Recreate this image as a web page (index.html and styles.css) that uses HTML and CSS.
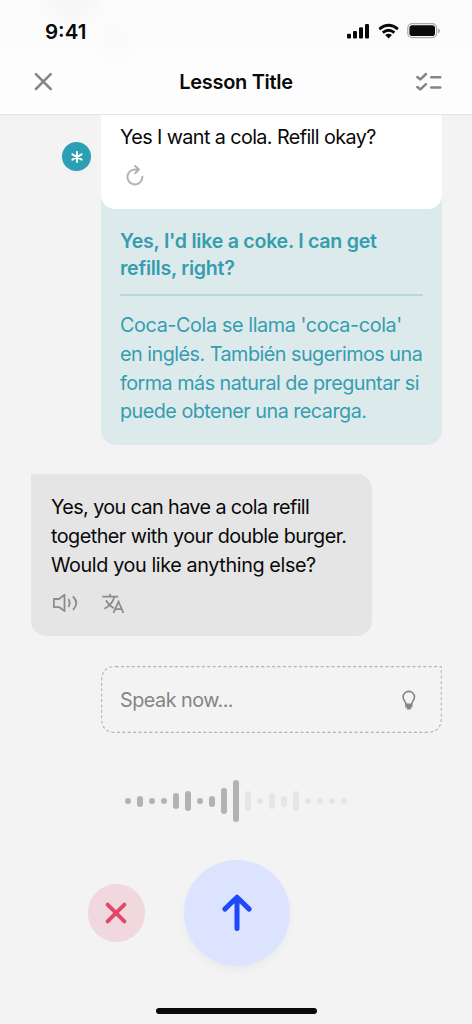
FILE: index.html
```html
<!DOCTYPE html>
<html lang="en">
<head>
<meta charset="utf-8">
<title>Lesson Title</title>
<link rel="stylesheet" href="styles.css">
</head>
<body>
<div class="screen">
  <header class="header">
    <div class="status">
      <span class="time">9:41</span>
      <svg class="status-icons" width="96" height="20" viewBox="344 21 96 20">
        <g fill="#0a0a0a">
          <rect x="347" y="33.7" width="4" height="4.8" rx="1.1"/>
          <rect x="353" y="31" width="4" height="7.5" rx="1.1"/>
          <rect x="359" y="27.3" width="4" height="11.2" rx="1.1"/>
          <rect x="365" y="24" width="4" height="14.5" rx="1.1"/>
          <path d="M385.2 35.1 Q388.6 32.5 392 35.1 L388.6 38.6 Z"/>
        </g>
        <path d="M379.3 29.1 Q388.6 21.4 397.9 29.1 M382.8 32.6 Q388.6 27.9 394.4 32.6" fill="none" stroke="#0a0a0a" stroke-width="2.7"/>
        <rect x="407.8" y="23.6" width="28.8" height="14" rx="4.4" fill="none" stroke="#aaa" stroke-width="1.2"/>
        <rect x="409.4" y="25.2" width="25.6" height="10.8" rx="2.8" fill="#0a0a0a"/>
        <path d="M438.1 28.6 Q440 29.2 440 31 Q440 32.7 438.1 33.3 Z" fill="#aaa"/>
      </svg>
    </div>
    <div class="nav">
      <svg class="nav-icon" width="28" height="24" viewBox="34 70 28 24" fill="none" stroke="#858585" stroke-width="2.5" stroke-linecap="round"><path d="M35.9 74.2 L50.7 89 M50.7 74.2 L35.9 89"/></svg>
      <h1 class="title">Lesson Title</h1>
      <svg class="nav-icon" width="28" height="24" viewBox="414 70 28 24" fill="none" stroke="#858585" stroke-width="2.5" stroke-linecap="round" stroke-linejoin="round"><path d="M417.3 77 L420.4 79.4 L426 74 M417.3 87 L420.4 89.4 L426 84.1 M431.2 77.3 H440.3 M431.2 87.4 H440.3"/></svg>
    </div>
  </header>

  <main class="chat">
    <section class="learner">
      <span class="badge"><svg width="14" height="14" viewBox="-7 -7 14 14" stroke="#fff" stroke-width="2" stroke-linecap="round"><path d="M0 -5.1 V5.1 M-4.6 -2.7 L4.6 2.7 M-4.6 2.7 L4.6 -2.7"/></svg></span>
      <div class="feedback">
        <div class="said">
          <p class="text"><span class="line l1">Yes I want a cola. Refill okay?</span></p>
          <svg class="retry" width="22" height="22" viewBox="0 0 22 22" fill="none" stroke="#b3b3b3" stroke-width="2" stroke-linecap="round" stroke-linejoin="round"><path d="M18.4 11.7 A7.5 7.5 0 1 1 10.9 4.4 L14.7 4.5 M11.2 1 L14.9 4.5 L11.2 8.2"/></svg>
        </div>
        <div class="notes">
          <p class="suggestion"><span class="line">Yes, I'd like a coke. I can get</span><span class="line">refills, right?</span></p>
          <p class="text explain"><span class="line l4">Coca-Cola se llama 'coca-cola'</span><span class="line">en inglés. También sugerimos una</span><span class="line">forma más natural de preguntar si</span><span class="line">puede obtener una recarga.</span></p>
        </div>
      </div>
    </section>

    <section class="reply">
      <p class="text"><span class="line l8">Yes, you can have a cola refill</span><span class="line">together with your double burger.</span><span class="line l10">Would you like anything else?</span></p>
      <div class="tools">
        <svg width="26" height="22" viewBox="52 592 26 22" fill="none" stroke="#8c8c8c" stroke-width="1.8" stroke-linecap="round" stroke-linejoin="round"><path d="M64.5 594.7 V611 L59 607.1 H53.9 V599 H59 Z M68.8 599.8 Q70.5 603 68.8 606.3 M73.4 597 Q79.2 603 73.4 609.3"/></svg>
        <svg width="24" height="22" viewBox="101 592 24 22" fill="none" stroke="#8c8c8c" stroke-width="1.8"><path d="M102.2 596.6 H118.2 M110 594 V596.6 M114.5 596.6 Q112.2 605 104.4 608.8 M106 600.2 Q109 605.7 114 608.2 M113.5 612.8 L118.5 601.7 L123.4 612.8 M115 609.2 H122"/></svg>
      </div>
    </section>

    <section class="prompt">
      <svg class="outline" width="341" height="67" fill="none" stroke="#b2b2b2" stroke-width="1.1" stroke-dasharray="3 2.4"><path d="M14.5 .6 H340.3 V52 Q340.3 66.4 326 66.4 H14.5 Q.6 66.4 .6 52 V15 Q.6 .6 14.5 .6"/></svg>
      <span class="line">Speak now...</span>
      <svg width="16" height="22" viewBox="401 688 16 22"><path d="M406 703.5 C406 700.6 403.1 699.4 403.1 695.9 A5.7 5.5 0 0 1 414.5 695.9 C414.5 699.4 411.6 700.6 411.6 703.5" fill="none" stroke="#858585" stroke-width="1.6"/><path d="M405.2 702.6 H412.4 V706.6 H410.8 V708.4 H406.8 V706.6 H405.2 Z" fill="#858585"/></svg>
    </section>
  </main>

  <footer class="controls">
    <div class="wave">
      <i class="dot"></i><i class="s"></i><i class="dot"></i><i class="dot"></i><i class="m"></i><i class="l"></i><i class="dot"></i><i class="s"></i><i class="xl"></i><i class="peak"></i>
      <i class="l idle"></i><i class="dot idle"></i><i class="m idle"></i><i class="s idle"></i><i class="l idle"></i><i class="dot idle"></i><i class="dot idle"></i><i class="dot idle"></i><i class="dot idle"></i>
    </div>
    <div class="actions">
      <button class="cancel" aria-label="Cancel"><svg width="24" height="24" viewBox="-12 -12 24 24" stroke="#e0486b" stroke-width="4" stroke-linecap="round"><path d="M-8.4 -8.4 L8.4 8.4 M8.4 -8.4 L-8.4 8.4"/></svg></button>
      <button class="send" aria-label="Send"><svg width="34" height="42" viewBox="-17 -21 34 42" fill="none" stroke="#1f49f5" stroke-width="5" stroke-linecap="round" stroke-linejoin="round"><path d="M0 15.5 V-15.8 M-12.2 -3.9 L0 -15.8 L12.2 -3.9"/></svg></button>
    </div>
    <div class="home"></div>
  </footer>
</div>
</body>
</html>
```

FILE: styles.css
```css
* { box-sizing: border-box; }
body { margin: 0; font-family: Inter, "Liberation Sans", sans-serif; background: #f3f3f3; color: #090909; }
p, h1 { margin: 0; }
svg { display: block; flex: none; }
.screen { width: 472px; height: 1024px; display: flex; flex-direction: column; overflow: hidden; background: #f3f3f3; }
.header { height: 115px; flex: none; border-bottom: 1px solid #e4e4e4; background: radial-gradient(circle at 72px 0, #f5f5f5 0, transparent 34px), radial-gradient(circle at 115px 40px, #f9f9f9 0, transparent 24px), linear-gradient(#fbfbfb, #fefefe); }
.status { height: 62px; padding: 21px 32px 0 45px; display: flex; justify-content: space-between; }
.time { font-size: 20.5px; line-height: 21px; font-weight: 600; letter-spacing: 0; }
.nav { display: flex; align-items: center; justify-content: space-between; padding: 8px 30px 0 34px; }
.title { font-size: 20px; line-height: 24px; font-weight: 600; letter-spacing: -.3px; white-space: nowrap; margin-right: 4px; }
.line { display: block; width: max-content; white-space: nowrap; }
.text { font-size: 19.8px; line-height: 28.8px; letter-spacing: -.52px; }
.l1, .l8 { letter-spacing: -.6px; }
.l4, .l10 { letter-spacing: -.39px; }
.chat { flex: none; height: 618px; display: flex; flex-direction: column; align-items: flex-end; padding-right: 30px; }
.learner { display: flex; gap: 10px; height: 329px; }
.badge { width: 29px; height: 29px; margin-top: 27px; display: flex; align-items: center; justify-content: center; border-radius: 50%; background: #2b9fb3; box-shadow: 0 2px 4px #00000008; }
.feedback { width: 341px; height: 330px; background: #ddeaeb; border-radius: 0 0 15px 15px; }
.said { height: 94px; padding: 8px 19px 0; background: #fff; border-radius: 0 0 14px 14px; }
.retry { margin: 13px 0 0 4px; }
.notes { padding: 19px 19px 0; color: #359db0; }
.suggestion { font-size: 19.6px; line-height: 26.5px; font-weight: 600; letter-spacing: -.26px; padding-bottom: 13px; border-bottom: 2px solid #b3d9df; }
.explain { padding-top: 15px; }
.reply { width: 341px; height: 163px; margin: 30px 70px 30px 0; padding: 19px 20px 0; background: #e5e5e5; border-radius: 0 15px 15px 15px; }
.tools { display: flex; gap: 23px; margin: 13px 0 0 1px; }
.prompt { position: relative; width: 341px; height: 67px; padding: 0 25px 0 19px; display: flex; align-items: center; justify-content: space-between; font-size: 19.8px; letter-spacing: -.5px; color: #858585; }
.outline { position: absolute; inset: 0; }
.reply { margin-right: 40px; align-self: flex-start; margin-left: 31px; }
.controls { flex: 1; display: flex; flex-direction: column; align-items: center; }
.wave { height: 44px; margin-top: 46px; display: flex; align-items: center; gap: 6px; }
.wave i { width: 6px; height: 6px; border-radius: 3px; background: #b2b2b2; }
.wave .s { height: 11px; }
.wave .m { height: 16px; }
.wave .l { height: 20px; }
.wave .xl { height: 26px; }
.wave .peak { height: 42px; }
.wave .idle { background: #e5e5e5; }
.actions { width: 472px; height: 106px; margin-top: 37px; padding-left: 87.5px; display: flex; align-items: center; gap: 38.5px; }
button { padding: 0; border: 0; border-radius: 50%; display: flex; align-items: center; justify-content: center; }
.cancel { width: 57.5px; height: 57.5px; background: #f0d8de; }
.send { width: 106px; height: 106px; background: #dbe3ff; box-shadow: 0 4px 9px #0000000a; }
.home { width: 161px; height: 6px; margin-top: 42px; border-radius: 3px; background: #090909; }
```
